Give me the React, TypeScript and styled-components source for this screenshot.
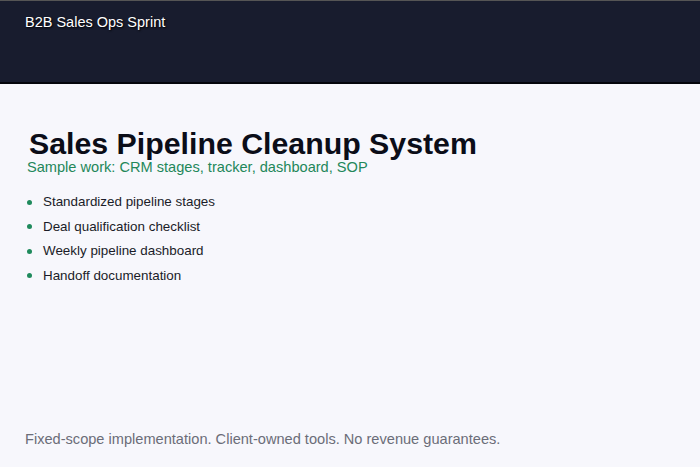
import React from "react";
import styled, { createGlobalStyle } from "styled-components";

const Global = createGlobalStyle`
  html, body { margin: 0; padding: 0; background: #f7f7fc; }
  body { font-family: "Liberation Sans", Arial, sans-serif; }
`;

const Page = styled.div`
  width: 700px;
  height: 467px;
  display: flex;
  flex-direction: column;
  background: #f7f7fc;
`;

const Header = styled.header`
  height: 84px;
  background: #181c2e;
  border-top: 1px solid #555;
  border-bottom: 2px solid #05060c;
  padding: 13px 0 0 25px;
  box-sizing: border-box;
  color: #fff;
  font-size: 14.5px;
  text-shadow: 1px 1px 2px #000;
`;

const Main = styled.main`
  flex: 1;
  display: flex;
  flex-direction: column;
  padding: 45px 0 0 27px;
`;

const Title = styled.h1`
  margin: 0 0 0 2px;
  font-size: 30.3px;
  font-weight: bold;
  color: #0b0d18;
  line-height: 30px;
`;

const Subtitle = styled.div`
  color: #23875a;
  font-size: 14.6px;
  line-height: 17px;
`;

const List = styled.ul`
  list-style: none;
  margin: 18px 0 0 0;
  padding: 0;
  display: flex;
  flex-direction: column;
  gap: 8.5px;
`;

const Item = styled.li`
  display: flex;
  align-items: center;
  gap: 11px;
  font-size: 13.4px;
  line-height: 16px;
  color: #1a1c28;
`;

const Dot = styled.span`
  width: 5px;
  height: 5px;
  border-radius: 50%;
  background: #1f8a5c;
`;

const Footer = styled.div`
  margin-top: auto;
  margin-bottom: 20px;
  margin-left: -2px;
  font-size: 14.6px;
  color: #6b6d78;
`;

const items = [
  "Standardized pipeline stages",
  "Deal qualification checklist",
  "Weekly pipeline dashboard",
  "Handoff documentation",
];

export default function App() {
  return (
    <Page>
      <Global />
      <Header>B2B Sales Ops Sprint</Header>
      <Main>
        <Title>Sales Pipeline Cleanup System</Title>
        <Subtitle>Sample work: CRM stages, tracker, dashboard, SOP</Subtitle>
        <List>
          {items.map((t) => (
            <Item key={t}>
              <Dot />
              {t}
            </Item>
          ))}
        </List>
        <Footer>Fixed-scope implementation. Client-owned tools. No revenue guarantees.</Footer>
      </Main>
    </Page>
  );
}
